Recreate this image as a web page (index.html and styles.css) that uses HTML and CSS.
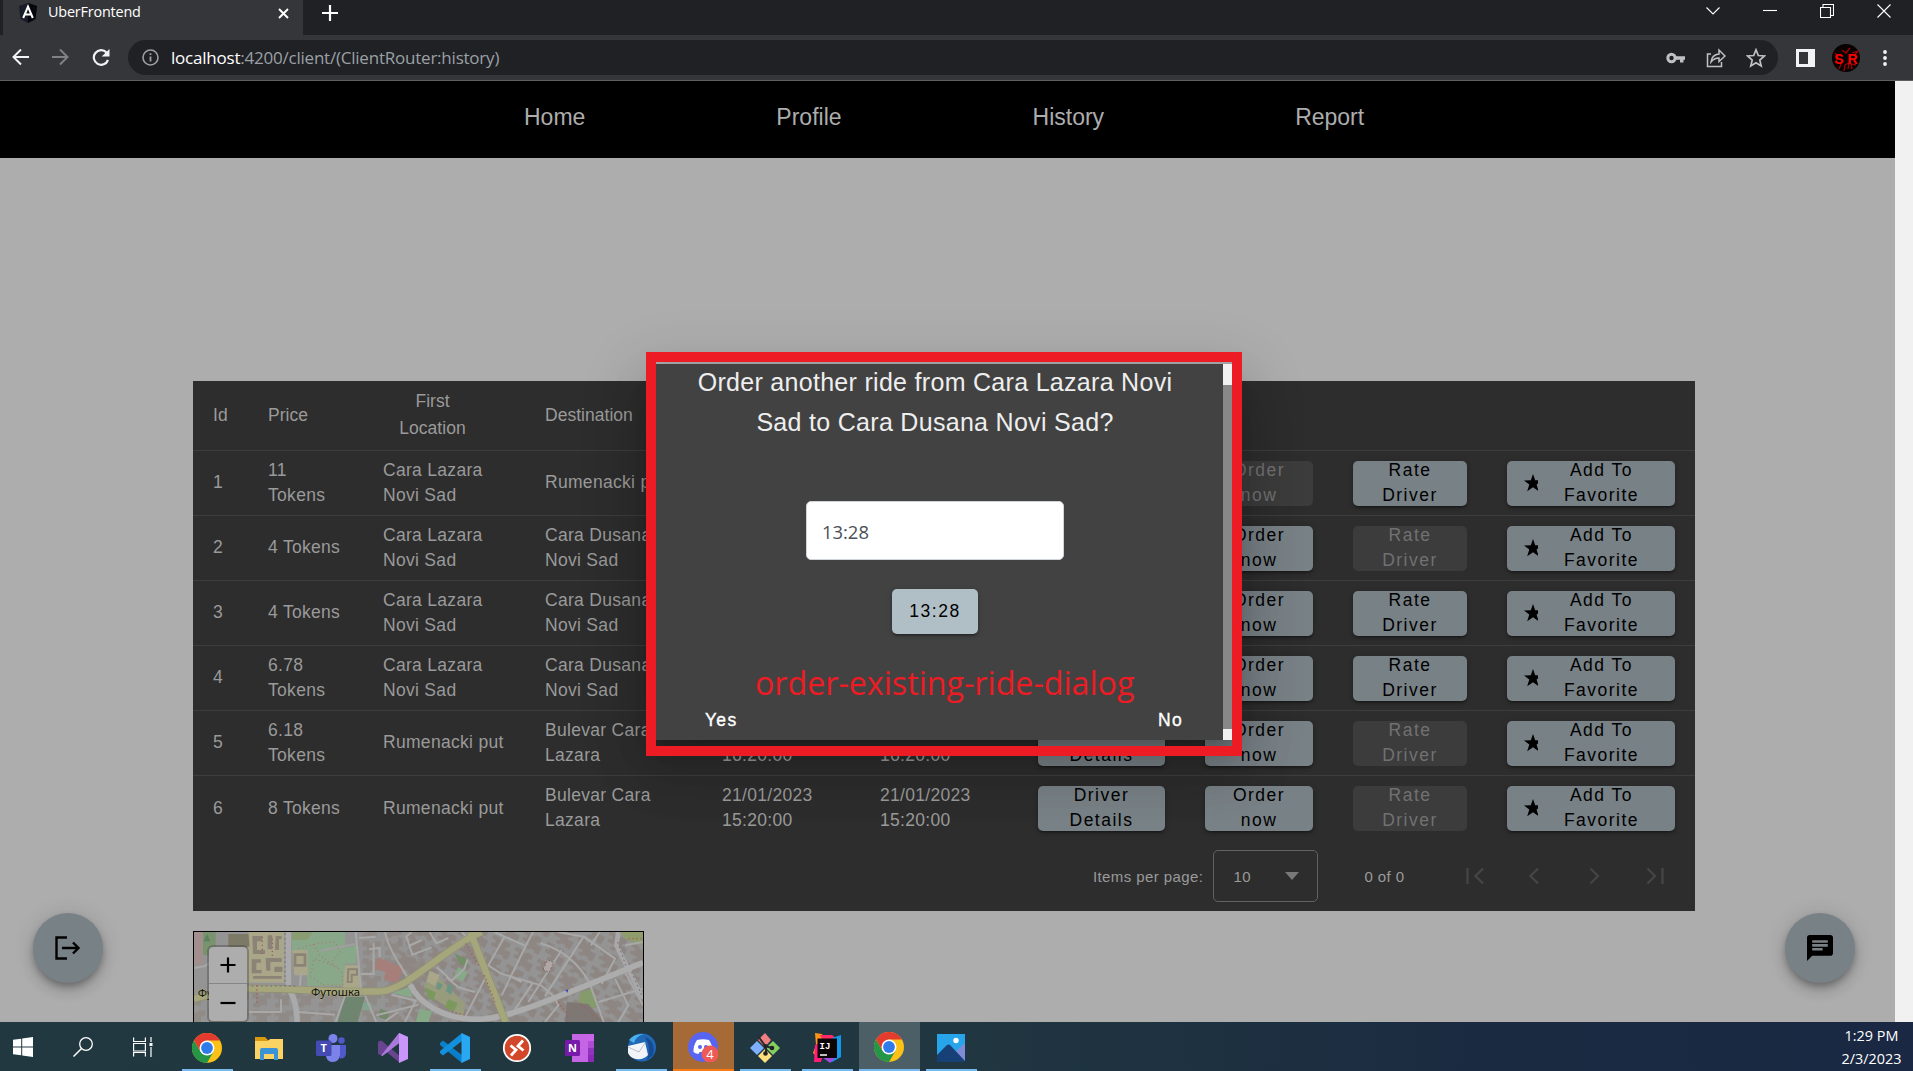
FILE: index.html
```html
<!DOCTYPE html>
<html lang="en">
<head>
<meta charset="utf-8">
<title>UberFrontend</title>
<link rel="stylesheet" href="styles.css">
</head>
<body>
<svg class="defs" width="0" height="0">
  <symbol id="star" viewBox="0 0 14 18"><path d="M9 0 L11.2 6.3 L18 6.4 L12.6 10.5 L14.6 17.2 L9 13.3 L3.2 17.2 L5.3 10.5 L0 6.4 L6.8 6.3Z"/></symbol>
  <symbol id="chrome" viewBox="0 0 30 30">
    <circle cx="15" cy="15" r="15" fill="#fbc116"/>
    <path d="M2 7.5A15 15 0 0 1 28 7.5H15L8.5 18.7Z" fill="#e33b2e"/>
    <path d="M2 7.5A15 15 0 0 0 15 30L21.5 18.7L15 15L8.5 18.7Z" fill="#259547"/>
    <circle cx="15" cy="15" r="7.5" fill="#fff"/><circle cx="15" cy="15" r="5.9" fill="#2f7bea"/>
  </symbol>
</svg>
<div class="screen">
  <header class="tabs">
    <div class="tab">
      <svg class="favicon" width="18" height="20" viewBox="0 0 18 20"><path d="M9 0L18 3L16.500 16L9 20L1.500 16L0 3Z" fill="#181b28"/><path d="M9 0L18 3L16.500 16L9 20Z" fill="#05060e"/><path d="M4.200 15L9 3.500L13.800 15M6 11.500H12" fill="none" stroke="#fff" stroke-width="2"/></svg>
      <span class="tab-title">UberFrontend</span>
      <svg width="11" height="11" viewBox="0 0 11 11"><path d="M1 1L10 10M10 1L1 10" stroke="#fff" stroke-width="1.900"/></svg>
    </div>
    <svg class="plus" width="16" height="16" viewBox="0 0 16 16"><path d="M8 0V16M0 8H16" stroke="#fff" stroke-width="2.200"/></svg>
    <div class="window-buttons">
      <svg width="14" height="14" viewBox="0 0 14 14"><path d="M.5 3.500L7 10L13.500 3.500"/></svg>
      <svg width="14" height="14" viewBox="0 0 14 14"><path d="M0 6.500H14"/></svg>
      <svg width="14" height="14" viewBox="0 0 14 14"><path d="M.5 3.500H10.500V13.500H.5ZM3 3.500V.5H13.500V11.500H10.500"/></svg>
      <svg width="14" height="14" viewBox="0 0 14 14"><path d="M.5 .5L13.500 13.500M13.500 .5L.5 13.500"/></svg>
    </div>
  </header>
  <div class="toolbar">
    <svg width="18" height="18" viewBox="0 0 18 18"><path d="M17 8H1.500M9 .5L1.500 8L9 15.500" fill="none" stroke="#f1f3f4" stroke-width="2"/></svg>
    <svg width="18" height="18" viewBox="0 0 18 18"><path d="M0 8H15.500M8 .5L15.500 8L8 15.500" fill="none" stroke="#808184" stroke-width="2"/></svg>
    <svg width="18" height="18" viewBox="0 0 18 18"><path d="M16 11A7.300 7.300 0 1 1 14.500 3.500" fill="none" stroke="#f1f3f4" stroke-width="2.200"/><path d="M17.500 0V7.500H9.700Z" fill="#f1f3f4"/></svg>
    <div class="omnibox">
      <svg width="17" height="17" viewBox="0 0 17 17"><circle cx="8.500" cy="8.500" r="7.500" fill="none" stroke="#9aa0a6" stroke-width="1.600"/><path d="M8.500 7.500V12.500M8.500 4.300V6" stroke="#9aa0a6" stroke-width="1.800"/></svg>
      <span class="url"><b>localhost</b>:4200/client/(ClientRouter:history)</span>
      <div class="omni-icons">
        <svg width="20" height="20" viewBox="0 0 20 20"><circle cx="5.500" cy="10" r="3.700" fill="none" stroke="#bdc1c6" stroke-width="3"/><path d="M9 8.200H19V11.800H17.500V14.500H14V11.800H9Z" fill="#bdc1c6"/></svg>
        <svg width="20" height="20" viewBox="0 0 20 20" fill="none" stroke="#bdc1c6" stroke-width="1.500"><path d="M5 6H1.500V18.500H15.500V14M5 14C5.500 9.500 8 6.500 13 6V2L19 8L13 13.500V10C9.500 10 7 11.500 5 14Z"/></svg>
        <svg width="20" height="20" viewBox="0 0 20 20"><path d="M10 1.800L12.300 7.500L18.500 8L13.800 12L15.200 18L10 14.800L4.800 18L6.200 12L1.500 8L7.700 7.500Z" fill="none" stroke="#bdc1c6" stroke-width="1.700"/></svg>
      </div>
    </div>
    <svg class="panel" width="19" height="18" viewBox="0 0 19 18"><path d="M1.500 1.500H17.500V16.500H1.500Z" fill="none" stroke="#f1f3f4" stroke-width="3"/><path d="M12 1H18V17H12Z" fill="#f1f3f4"/></svg>
    <svg class="avatar" width="28" height="28" viewBox="0 0 28 28"><circle cx="14" cy="14" r="14" fill="#090000"/><path d="M3 9L6 12L4 18L9 20L7 25M12 27L13 21L17 19L16 25M20 25L19 20L24 21M22 12L26 7L20 9M10 6L14 9L18 4" fill="none" stroke="#a00000" stroke-width="1.300"/><text x="14" y="19.500" class="initials">S R</text></svg>
    <svg width="4" height="16" viewBox="0 0 4 16" fill="#f1f3f4"><circle cx="2" cy="2" r="1.900"/><circle cx="2" cy="8" r="1.900"/><circle cx="2" cy="14" r="1.900"/></svg>
  </div>

  <main class="viewport">
    <div class="page">
      <nav class="nav"><a>Home</a><a>Profile</a><a>History</a><a>Report</a></nav>
      <section class="card">
        <table class="rides">
          <colgroup><col class="c1"><col class="c2"><col class="c3"><col class="c4"><col class="c5"><col class="c5"><col class="c7"><col class="c8"><col class="c9"><col class="c10"></colgroup>
          <thead><tr><th>Id</th><th>Price</th><th class="mid">First Location</th><th>Destination</th><th></th><th></th><th></th><th></th><th></th><th></th></tr></thead>
          <tbody>
            <tr><td>1</td><td>11 Tokens</td><td>Cara Lazara Novi Sad</td><td>Rumenacki put</td><td></td><td></td><td></td><td><div class="btn off">Order now</div></td><td><div class="btn">Rate Driver</div></td><td><div class="btn fav"><svg><use href="#star"/></svg><span>Add To Favorite</span></div></td></tr>
            <tr><td>2</td><td>4 Tokens</td><td>Cara Lazara Novi Sad</td><td>Cara Dusana Novi Sad</td><td></td><td></td><td></td><td><div class="btn">Order now</div></td><td><div class="btn off">Rate Driver</div></td><td><div class="btn fav"><svg><use href="#star"/></svg><span>Add To Favorite</span></div></td></tr>
            <tr><td>3</td><td>4 Tokens</td><td>Cara Lazara Novi Sad</td><td>Cara Dusana Novi Sad</td><td></td><td></td><td></td><td><div class="btn">Order now</div></td><td><div class="btn">Rate Driver</div></td><td><div class="btn fav"><svg><use href="#star"/></svg><span>Add To Favorite</span></div></td></tr>
            <tr><td>4</td><td>6.78 Tokens</td><td>Cara Lazara Novi Sad</td><td>Cara Dusana Novi Sad</td><td></td><td></td><td></td><td><div class="btn">Order now</div></td><td><div class="btn">Rate Driver</div></td><td><div class="btn fav"><svg><use href="#star"/></svg><span>Add To Favorite</span></div></td></tr>
            <tr><td>5</td><td>6.18 Tokens</td><td>Rumenacki put</td><td>Bulevar Cara Lazara</td><td>&nbsp;<br>16:20:00</td><td>&nbsp;<br>16:20:00</td><td><div class="btn">Driver Details</div></td><td><div class="btn">Order now</div></td><td><div class="btn off">Rate Driver</div></td><td><div class="btn fav"><svg><use href="#star"/></svg><span>Add To Favorite</span></div></td></tr>
            <tr><td>6</td><td>8 Tokens</td><td>Rumenacki put</td><td>Bulevar Cara Lazara</td><td>21/01/2023 15:20:00</td><td>21/01/2023 15:20:00</td><td><div class="btn">Driver Details</div></td><td><div class="btn">Order now</div></td><td><div class="btn off">Rate Driver</div></td><td><div class="btn fav"><svg><use href="#star"/></svg><span>Add To Favorite</span></div></td></tr>
          </tbody>
        </table>
        <div class="paginator">
          <span>Items per page:</span>
          <div class="select"><span>10</span><i></i></div>
          <span class="range">0 of 0</span>
          <div class="pager">
            <svg viewBox="0 0 60 30"><path d="M43 7.500L35.500 15L43 22.500M27.500 7V23"/></svg>
            <svg viewBox="0 0 60 30"><path d="M38 7.500L30.500 15L38 22.500"/></svg>
            <svg viewBox="0 0 60 30"><path d="M30.500 7.500L38 15L30.500 22.500"/></svg>
            <svg viewBox="0 0 60 30"><path d="M27.500 7.500L35 15L27.500 22.500M42.500 7V23"/></svg>
          </div>
        </div>
      </section>
      <section class="map">
        <svg class="tiles" viewBox="27 30 1347 270" preserveAspectRatio="none">
          <defs>
            <pattern id="houses" width="76" height="58" patternUnits="userSpaceOnUse" patternTransform="rotate(28)"><path d="M0 4H24V10H36V4H58V20H50V28H70V54H54V48H38V54H22V44H30V36H6V26H14V16H0Z" fill="#8d8682"/></pattern>
            <pattern id="houses2" width="66" height="52" patternUnits="userSpaceOnUse"><path d="M4 4H24V12H40V6H60V22H48V42H28V48H6V34H16V22H4Z" fill="#8f8a86"/></pattern>
          </defs>
          <path d="M27 30H1374V300H27Z" fill="#959494"/>
          <path d="M27 200H640V300H27ZM520 30H720V200H520Z" fill="url(#houses2)"/>
          <path d="M640 30H1374V300H640Z" fill="url(#houses)"/>
          <path d="M27 30H54V125L27 130Z" fill="#a38e8e"/><path d="M54 30H92V78L70 100H54Z" fill="#79936f"/><path d="M66 36L56 58H76Z" fill="#5d8060"/>
          <path d="M130 36H194V76H130Z" fill="#7c7966"/>
          <path d="M190 30H298V182H186V74H194Z" fill="#aaa68a"/>
          <path d="M202 42H232V58H216V84H240V96H204ZM248 40H262V82H248ZM272 42H290V52H282V84H270ZM200 112H228V122H214V144H230V154H200ZM242 108H290V120H256V146H244ZM268 134H292V150H268ZM204 162H290V170H204Z" fill="#8a8376"/>
          <path d="M320 30H480V78L517 68L512 125H480V192H366V90H322Z" fill="#89a789"/><path d="M320 30H384L366 54H322Z" fill="#8a9d72"/>
          <path d="M322 84H368V160H328Z" fill="#aaa68a"/><path d="M330 98H360V130H330Z" fill="none" stroke="#8a8376" stroke-width="8"/>
          <path d="M480 130H524V198H474Z" fill="#aaa68a"/><path d="M490 142H516V158H500V180H488Z" fill="none" stroke="#8a8376" stroke-width="6"/>
          <path d="M408 86L510 66" stroke="#a0a0a0" stroke-width="6"/>
          <path d="M340 80L400 64L450 60L466 90L440 120L470 150L474 190L410 188L376 160L388 110L430 125L460 140M384 66L404 100L444 130" fill="none" stroke="#b46c68" stroke-width="3" stroke-dasharray="3 9"/>
          <path d="M578 106L656 138L638 184L596 172L602 150L568 140Z" fill="#a67f7b"/>
          <path d="M478 225H540L518 300H458Z" fill="#6e8670"/><path d="M534 242H560V264H534Z" fill="#7fa58e"/><path d="M586 260L614 270L606 294L580 286Z" fill="#74896c"/>
          <path d="M486 240L474 296M522 240L504 296" stroke="#9d6a60" stroke-width="2" stroke-dasharray="3 8"/>
          <path d="M624 214L672 194L682 226Z" fill="#86a988"/><path d="M704 260L742 268L730 300H692Z" fill="#86a988"/>
          <path d="M742 148L840 244L836 286L744 228L716 196Z" fill="#969c7c"/><path d="M734 146L764 160L750 192L724 178Z" fill="#aaa68a"/><path d="M790 186L806 192L798 218L782 208ZM758 180L774 188L764 204L752 198Z" fill="#6f9486"/><path d="M820 134L848 152L834 178L806 166Z" fill="#86a988"/><path d="M808 94L846 112L850 134L826 128Z" fill="#748e67"/>
          <path d="M720 196L752 212L744 238L728 226ZM790 232L818 244L806 270L780 256Z" fill="#7b985d"/>
          <path d="M1306 30H1374V70L1320 50Z" fill="#8f9d6d"/><path d="M1186 210L1222 200L1242 248L1220 262L1180 238Z" fill="#869b6c"/><path d="M1146 240L1210 246L1256 300H1140Z" fill="#7e7773"/>
          <g fill="none" stroke="#a8a8a8" stroke-width="6">
            <path d="M512 30L528 200M566 64V156H528M522 48L572 44M552 82L584 78V106M600 30C612 90 650 130 680 190M680 30L664 44L682 98L740 76M672 72L710 54M734 30L754 64L790 48M830 30L848 48"/>
            <path d="M27 138L60 132L92 110M190 270H288V232M340 270L450 278M480 222L452 300M540 220L574 300M574 280L700 248M620 218L692 236L660 300M600 298L640 270M348 152L344 200"/>
            <path d="M960 42L910 130L948 155L1068 190L1108 224M928 30L1022 72L1044 30M1066 64Q1160 90 1212 180M1022 72L950 220M1130 84L1030 240M1196 44L1080 222M1196 44L1290 110L1250 186M1120 30L1196 44M1244 30L1218 70M1044 182L990 262M1212 180L1256 300M1108 224L1120 250L1080 300M900 170L838 290M970 160L1010 180M1320 150L1374 250M1290 170L1330 250L1300 300M1240 240L1374 200M1374 60L1320 70M756 136L800 176L838 140L848 112M784 166L820 196L870 210"/>
          </g>
          <path d="M1300 30L1294 70L1330 142L1374 230" fill="none" stroke="#a8a8a8" stroke-width="14"/>
          <path d="M310 30V190M316 208Q338 250 336 300" fill="none" stroke="#aaa" stroke-width="17"/>
          <path d="M676 188C700 240 770 290 870 292C960 292 1040 256 1374 122" fill="none" stroke="#acacac" stroke-width="17"/>
          <path d="M27 230L60 222L184 200C340 198 400 212 590 208C660 200 720 130 862 42L890 30M856 30L962 300" fill="none" stroke="#8f906f" stroke-width="23"/>
          <path d="M27 230L60 222L184 200C340 198 400 212 590 208C660 200 720 130 862 42L890 30M856 30L962 300" fill="none" stroke="#a6a67c" stroke-width="19"/>
          <path d="M300 34V190M200 192H340M1298 60L1322 130M1340 150L1370 220" fill="none" stroke="#6e6794" stroke-width="3" stroke-dasharray="5 9"/>
          <path d="M232 44V100M262 50V110M216 190V250M842 64L880 130M898 160L930 240M1078 120L1100 150M800 270L838 278M1120 240L1150 280M1188 246L1240 292M1330 50L1370 50" fill="none" stroke="#a35f5b" stroke-width="4" stroke-dasharray="4 8"/>
          <path d="M1074 142L1088 114L1106 122L1092 152Z" fill="#b3a7a5" stroke="#746e6e" stroke-width="3" stroke-dasharray="6 5"/>
          <path d="M1140 204L1150 202L1148 212Z" fill="#3f4bb0"/>
          <text x="378" y="221" textLength="147" lengthAdjust="spacingAndGlyphs" class="street">Футошка</text><text x="38" y="226" class="street">Фу</text>
        </svg>
        <div class="zoom"><span><svg width="16" height="16" viewBox="0 0 16 16"><path d="M8 .5V15.500M.5 8H15.500" stroke="#000" stroke-width="2.200"/></svg></span><span><svg width="16" height="16" viewBox="0 0 16 16"><path d="M.5 8H15.500" stroke="#000" stroke-width="2.200"/></svg></span></div>
      </section>
      <div class="fab logout"><svg width="26" height="24" viewBox="0 0 26 24"><path d="M12 1.500H1.500V22.500H12M7 12H23M18 6.500L23.500 12L18 17.500" fill="none" stroke="#000" stroke-width="2.400"/></svg></div>
      <div class="fab chat"><svg width="26" height="26" viewBox="2 2 20 20"><path d="M20 2H4c-1.100 0-1.990.9-1.990 2L2 22l4-4h14c1.100 0 2-.9 2-2V4c0-1.100-.9-2-2-2zM6 9h12v2H6V9zm8 5H6v-2h8v2zm4-6H6V6h12v2z"/></svg></div>
    </div>
    <div class="scrollbar"></div>
  </main>

  <footer class="taskbar">
    <div class="sys start"><svg width="20" height="20" viewBox="0 0 20 20" fill="#fff"><path d="M0 2.800L8.200 1.700V9.500H0ZM9.200 1.500L20 0V9.500H9.200ZM0 10.500H8.200V18.300L0 17.200ZM9.200 10.500H20V20L9.200 18.500Z"/></svg></div>
    <div class="sys"><svg width="20" height="20" viewBox="0 0 20 20"><circle cx="13" cy="7" r="6.300" fill="none" stroke="#fff" stroke-width="1.300"/><path d="M8.500 11.500L.5 19.500" stroke="#fff" stroke-width="1.500"/></svg></div>
    <div class="sys"><svg width="20" height="20" viewBox="0 0 20 20" fill="none" stroke="#fff" stroke-width="1.200"><path d="M.6 .5V4.500H12.400V.5M.6 19.500V15.500H12.400V19.500M.6 6.500H12.400V14H.6ZM18 0V5M18 10V20"/><path d="M16.500 6H19.500V9H16.500Z" fill="#fff" stroke="none"/></svg></div>
    <div class="app run"><svg><use href="#chrome"/></svg></div>
    <div class="app"><svg viewBox="0 0 30 30"><path d="M1 4H11L14 7H28V12H1Z" fill="#d99a10"/><path d="M1 8H14L16 6H29V26H1Z" fill="#fbd364"/><path d="M6 27V17Q6 15 8 15H22Q24 15 24 17V27H20V21H10V27Z" fill="#3a93d6"/></svg></div>
    <div class="app"><svg viewBox="0 0 30 30"><circle cx="25.500" cy="7.500" r="3.200" fill="#5059c9"/><path d="M21 12H30V21Q29 26 24 25.500Z" fill="#5059c9"/><circle cx="17" cy="5.500" r="4.500" fill="#7b83eb"/><path d="M11 12H24V22Q23 29 17 29T10 23Z" fill="#7b83eb"/><rect y="7.500" width="15.500" height="15.500" rx="1.500" fill="#444bb3"/><text x="7.700" y="19" class="glyph t">T</text></svg></div>
    <div class="app"><svg viewBox="0 0 30 30"><path d="M0 9L3 7.500L22 23V30L0 12Z" fill="#68458f"/><path d="M0 9L4 8L7.500 11.500V19L4 22.500L0 21Z" fill="#68458f"/><path d="M3 22.500L21 0L30 4L22 9.500L4.500 23Z" fill="#a979dc"/><path d="M21 0L30 4V26L21 30Z" fill="#c896f8"/></svg></div>
    <div class="app run"><svg viewBox="0 0 30 30"><path d="M0 10L3 7.500L22 22V30L0 12Z" fill="#0a7fc9"/><path d="M0 20L3 22.500L22 8V0L0 18Z" fill="#1390dc"/><path d="M21.500 0L30 4V26L21.500 30Z" fill="#2aa7f3"/></svg></div>
    <div class="app"><svg viewBox="0 0 30 30"><circle cx="15" cy="15" r="13.200" fill="#d2472a" stroke="#fff" stroke-width="1.800"/><path d="M8.500 12.500L14 17L9 22.500M21 7.500L16 13L21.500 17.500" fill="none" stroke="#fff" stroke-width="2.800"/></svg></div>
    <div class="app"><svg viewBox="0 0 30 30"><path d="M8 1H30V29H8Z" fill="#ca64ea"/><path d="M24 8H30V15H24Z" fill="#ae4bd5"/><path d="M24 15H30V22H24Z" fill="#9332bf"/><path d="M8 22H30V29H8Z" fill="#8b29b5"/><path d="M8 1H24V29H8Z" fill="#c465e6"/><rect x="1" y="7" width="15" height="16" rx="1.500" fill="#7719aa"/><text x="8.500" y="19" class="glyph t">N</text></svg></div>
    <div class="app run"><svg viewBox="0 0 30 30"><circle cx="16" cy="14.500" r="14" fill="#1f68b6"/><path d="M3 7Q8 0 18 1Q10 3 8 10Z" fill="#4cb0ee"/><path d="M19 4Q30 8 27 22L21 27Q26 15 19 4Z" fill="#174b91"/><path d="M2 13L19 9L22 22Q18 27 10 26Q4 25 2 20Z" fill="#f2f4f8"/><path d="M2 14L13 19L19 10" fill="none" stroke="#b6c1d0"/></svg></div>
    <div class="app alert"><svg viewBox="0 0 30 30"><circle cx="15" cy="15" r="15" fill="#5865f2"/><path d="M9 8Q15 6.500 21 8Q25 14 24.500 20Q22 22 19.500 22L18.500 20H11.500L10.500 22Q7 21.500 5.500 20Q5 14 9 8Z" fill="#fff"/><circle cx="12" cy="15" r="2" fill="#5865f2"/><circle cx="18" cy="15" r="2" fill="#5865f2"/><circle cx="22" cy="22" r="8.500" fill="#ee5857"/><text x="22" y="26.500" class="glyph n">4</text></svg></div>
    <div class="app run"><svg viewBox="0 0 30 30"><path d="M15 0L21 7L15 14L8 7Z" fill="#f28080"/><path d="M7 8L14 15L7 22L0 15Z" fill="#7db0ff"/><path d="M23 8L30 15L23 22L16 15Z" fill="#84cf60"/><path d="M15 16L22 23L15 30L8 23Z" fill="#ffe07c"/><path d="M8 3L16 14V22M15 13L22 15" fill="none" stroke="#252d30" stroke-width="2"/><circle cx="15.500" cy="20.500" r="2.300" fill="#222"/><circle cx="22" cy="15" r="2.300" fill="#222"/><circle cx="15.500" cy="13" r="2" fill="#222"/></svg></div>
    <div class="app run"><svg viewBox="0 0 30 30"><path d="M3 0L10 1L15 10L7 26L1 20L4 12Z" fill="#ff9419"/><path d="M3 12L15 6L9 29L2 29Z" fill="#ff1d79"/><path d="M8 2L20 2L25 6L15 15Z" fill="#ff2a66"/><path d="M20 5L29 2V24L20 29L14 26Z" fill="#1597ea"/><path d="M10 24H24L18 30Z" fill="#a24bdd"/><rect x="5.500" y="5.500" width="19.500" height="19.500" fill="#0b0508"/><text x="7.500" y="15.500" class="glyph ij">IJ</text><path d="M8 22H15" stroke="#fff" stroke-width="1.500"/></svg></div>
    <div class="app active"><svg><use href="#chrome"/></svg></div>
    <div class="app run"><svg viewBox="0 0 30 30"><path d="M1 1H29V29H1Z" fill="#28a5ea"/><path d="M29 10L17 21L29 29Z" fill="#7e8bd6"/><path d="M1 22L11 12Q12.500 11 14 12L29 28V29H1Z" fill="#174077"/><circle cx="20" cy="7.500" r="2.700" fill="#fff"/></svg></div>
    <div class="clock"><span>1:29 PM</span><span>2/3/2023</span></div>
  </footer>

  <div class="dialog">
    <div class="dialog-body">
      <h2>Order another ride from Cara Lazara Novi Sad to Cara Dusana Novi Sad?</h2>
      <div class="time">13:28</div>
      <div class="btn pick">13:28</div>
      <div class="actions"><span>Yes</span><span>No</span></div>
    </div>
    <div class="dialog-scroll"></div>
  </div>
  <div class="frame"></div>
  <div class="note">order-existing-ride-dialog</div>
</div>
</body>
</html>
```
FILE: styles.css
```css
* { box-sizing: border-box; }
body { margin: 0; overflow: hidden; background: #adadad; font-family: "Liberation Sans", Arial, sans-serif; }
.defs { position: absolute; }
svg { display: block; flex: none; }
.screen { position: relative; width: 1913px; height: 1071px; display: flex; flex-direction: column; overflow: hidden; }

.tabs { height: 35px; flex: none; background: #202124; display: flex; align-items: flex-start; }
.tab { width: 300px; height: 35px; margin-left: 3px; padding: 0 14px 9px 16px; background: #35363a; display: flex; align-items: center; }
.tab-title { flex: 1; margin-left: 11px; padding-bottom: 2px; color: #fff; font: 14.4px/20px "Open Sans", sans-serif; letter-spacing: -.18px; }
.plus { margin: 5px 0 0 19px; }
.window-buttons { margin: 4px 22px 0 auto; display: flex; gap: 43px; }
.window-buttons path { fill: none; stroke: #fff; stroke-width: 1.1; }

.toolbar { height: 46px; flex: none; background: #35363a; border-bottom: 1px solid #5d5e62; display: flex; align-items: center; padding: 0 26px 0 12px; }
.toolbar > svg + svg { margin-left: 22px; }
.omnibox { width: 1650px; height: 35px; margin-left: 18px; border-radius: 18px; background: #202124; display: flex; align-items: center; padding: 0 12px 0 14px; }
.url { margin-left: 12px; color: #9aa0a6; font: 17px/24px "Open Sans", sans-serif; letter-spacing: -.22px; }
.url b { color: #fff; font-weight: 400; }
.omni-icons { margin-left: auto; display: flex; gap: 20px; }
.toolbar > .panel { margin-left: 18px; }
.toolbar > .avatar { margin: 0 1px 0 17px; }
.initials { fill: #f00; font: bold 14px "Liberation Sans", sans-serif; text-anchor: middle; }

.viewport { height: 941px; flex: none; display: flex; overflow: hidden; }
.page { width: 1895px; position: relative; background: #adadad; }
.scrollbar { width: 18px; background: #f1f1f1; }
.nav { height: 77px; background: #000; display: flex; gap: 191px; padding: 23px 0 0 524px; color: #adadad; font-size: 23px; line-height: 27px; }

.card { width: 1502px; height: 530px; margin: 223px 0 0 193px; background: #2d2d2d; color: #9a9a9a; }
.rides { width: 1502px; table-layout: fixed; border-collapse: collapse; font-size: 17.5px; }
.c1 { width: 55px; } .c2 { width: 115px; } .c3 { width: 162px; } .c4 { width: 177px; } .c5 { width: 158px; }
.c7 { width: 167px; } .c8 { width: 148px; } .c9 { width: 154px; } .c10 { width: 208px; }
.rides tr { height: 65px; border-bottom: 1px solid #3d3d3d; }
.rides tbody tr:last-child { height: 66px; border-bottom: 0; }
.rides thead tr { height: 69px; }
.rides th { padding: 0 20px; font-weight: 400; text-align: left; line-height: 27.5px; letter-spacing: .03px; }
.rides th.mid { text-align: center; padding: 0 43px 0 20px; }
.rides td { padding: 0 20px; line-height: 25px; letter-spacing: .3px; }
.rides td:nth-child(4) { padding-right: 30px; }
.btn { height: 45px; flex: none; border-radius: 5px; background: #788186; color: #000; font-size: 17.5px; line-height: 25px; letter-spacing: 1.5px; text-align: center; display: flex; align-items: center; justify-content: center; padding: 0 20px; box-shadow: 0 3px 2px -2px rgba(0,0,0,.25), 0 2px 3px rgba(0,0,0,.2), 0 1px 6px rgba(0,0,0,.12); }
.rides .btn { margin-top: 1px; padding-bottom: 1px; }
.btn.off { background: #3c3c3c; color: #717171; box-shadow: none; }
.rides .fav { padding: 0 20px 1px 17px; }
.fav svg { width: 14px; height: 18px; overflow: hidden; }
.fav span { flex: 1; margin-left: 10px; padding: 0 15px; }

.paginator { height: 70px; display: flex; align-items: center; justify-content: flex-end; padding-right: 15px; font-size: 15px; letter-spacing: .42px; }
.select { width: 105px; height: 52px; margin-left: 10px; border: 1px solid #626262; border-radius: 5px; display: flex; align-items: center; justify-content: space-between; padding: 0 18px 0 19px; }
.select i { border: 7px solid transparent; border-top: 8px solid #797979; border-bottom: 0; }
.range { margin: 0 35.5px 0 46px; }
.pager { display: flex; }
.pager svg { width: 60px; height: 30px; fill: none; stroke: #454545; stroke-width: 2.3; }

.map { position: relative; width: 451px; height: 120px; margin: 20px 0 0 193px; border: 1px solid #000; }
.tiles { width: 449px; height: 90px; }
.street { font: 34px "Noto Sans", sans-serif; fill: #111; stroke: #a6a67c; stroke-width: 3; paint-order: stroke; }
.zoom { position: absolute; left: 15px; top: 15px; width: 38px; background: #adadad; border-radius: 4px; box-shadow: 0 0 0 2px rgba(70,70,70,.4); }
.zoom span { height: 37px; display: flex; align-items: center; justify-content: center; }
.zoom span:first-child { border-bottom: 1px solid #858585; }
.fab { position: absolute; top: 832px; width: 70px; height: 70px; border-radius: 50%; background: #788186; display: flex; align-items: center; justify-content: center; box-shadow: 0 4px 6px -1px rgba(0,0,0,.25), 0 8px 13px rgba(0,0,0,.14), 0 1px 22px rgba(0,0,0,.12); }
.logout { left: 33px; }
.chat { left: 1785px; }

.taskbar { height: 49px; flex: none; background: linear-gradient(90deg, #213840 0, #203640 50%, #1a2a41 80%, #1a2843 100%); display: flex; }
.sys { width: 60px; display: flex; align-items: center; justify-content: center; }
.start { width: 53px; padding-right: 7px; }
.sys:nth-child(3) { margin-right: 4px; }
.app { width: 61px; height: 49px; margin-right: 1px; padding: 2px 2px 0 0; display: flex; align-items: center; justify-content: center; }
.app svg { width: 30px; height: 30px; }
.run { background: linear-gradient(#76b9ed, #76b9ed) center bottom / 51px 2px no-repeat; }
.alert { background: #a56a35; border-bottom: 2px solid #ff7a10; padding-top: 3px; }
.active { background: #4c5e66; border-bottom: 2px solid #76b9ed; padding-top: 3px; }
.glyph { fill: #fff; text-anchor: middle; }
.t { font: bold 11px "Open Sans", sans-serif; }
.n { font: 13px "Open Sans", sans-serif; }
.ij { font: bold 9px "Liberation Mono", monospace; text-anchor: start; }
.clock { width: 84px; margin-left: auto; padding: 2px 0 0 1px; display: flex; flex-direction: column; align-items: center; color: #fff; font: 14.4px/23px "Open Sans", sans-serif; }

.dialog { position: absolute; left: 647px; top: 364px; width: 593px; height: 376px; background: #424242; display: flex; box-shadow: 0 14px 19px -9px rgba(0,0,0,.2), 0 30px 48px 4px rgba(0,0,0,.14), 0 11px 58px 10px rgba(0,0,0,.12); }
.dialog-body { width: 576px; display: flex; flex-direction: column; align-items: center; }
.dialog h2 { width: 500px; margin: -2px 0 59px; color: #eee; font-size: 25px; font-weight: 400; line-height: 40px; letter-spacing: .3px; text-align: center; }
.time { width: 258px; height: 59px; flex: none; border: 1px solid #ced4da; border-radius: 5px; background: #fff; color: #495057; padding: 1px 15px 0; font: 18.4px/57px "Open Sans", sans-serif; }
.dialog .pick { width: 86px; margin-top: 29px; background: #b0bec5; padding: 0; }
.actions { align-self: stretch; margin-top: 63px; padding: 0 40px 0 58px; display: flex; justify-content: space-between; color: #fff; font-size: 17.5px; line-height: 46px; letter-spacing: 1.3px; -webkit-text-stroke: .35px #fff; }
.dialog-scroll { width: 17px; background: linear-gradient(#f1f1f1 0 21px, #888 21px 365px, #f1f1f1 365px); }
.frame { position: absolute; left: 646px; top: 352px; width: 596px; height: 404px; border: 10px solid #ed1c24; }
.note { position: absolute; left: 755px; top: 661px; color: #ed1c24; font: 32.2px/44px "Open Sans", sans-serif; white-space: nowrap; }
```
